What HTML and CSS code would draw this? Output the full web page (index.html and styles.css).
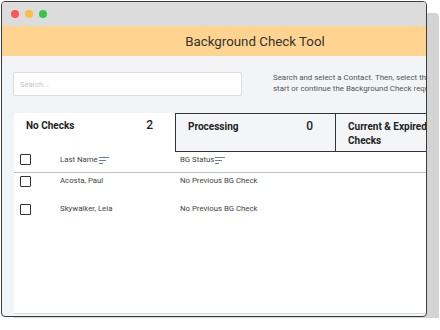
FILE: index.html
```html
<!DOCTYPE html>
<html lang="en">
<head>
    <meta charset="UTF-8">
    <meta name="viewport" content="width=device-width, initial-scale=1.0">
    <title>Background Check Tool</title>
    <link rel="stylesheet" href="styles.css">
</head>
<body>

<div class="window">
    <div class="titlebar">
        <span class="dot red"></span>
        <span class="dot yellow"></span>
        <span class="dot green"></span>
    </div>

    <div class="viewport">
        <div class="page">
            <div class="header">Background Check Tool</div>

            <div class="toolbar">
                <input type="text" class="search" placeholder="Search...">
                <p class="help">Search and select a Contact. Then, select the Background Check type to<br>start or continue the Background Check request for the Contact.</p>
            </div>

            <div class="panel">
                <div class="tabs">
                    <div class="tab active">
                        <span class="tab-label">No Checks</span>
                        <span class="tab-count">2</span>
                    </div>
                    <div class="tab">
                        <span class="tab-label">Processing</span>
                        <span class="tab-count">0</span>
                    </div>
                    <div class="tab">
                        <span class="tab-label">Current &amp; Expired Checks</span>
                        <span class="tab-count">0</span>
                    </div>
                </div>

                <div class="table">
                    <div class="row head">
                        <span class="cell check"><span class="box"></span></span>
                        <span class="cell name">Last Name
                            <svg class="sort" width="10" height="7" viewBox="0 0 10 7"><path d="M0 0.5H10M0 3.5H7M0 6.5H4" stroke="#6b7f99" stroke-width="1"/></svg>
                        </span>
                        <span class="cell status">BG Status
                            <svg class="sort" width="10" height="7" viewBox="0 0 10 7"><path d="M0 0.5H10M0 3.5H7M0 6.5H4" stroke="#6b7f99" stroke-width="1"/></svg>
                        </span>
                    </div>
                    <div class="row">
                        <span class="cell check"><span class="box"></span></span>
                        <span class="cell name">Acosta, Paul</span>
                        <span class="cell status">No Previous BG Check</span>
                    </div>
                    <div class="row">
                        <span class="cell check"><span class="box"></span></span>
                        <span class="cell name">Skywalker, Leia</span>
                        <span class="cell status">No Previous BG Check</span>
                    </div>
                </div>
            </div>
        </div>
    </div>
</div>

</body>
</html>
```

FILE: styles.css
```css
body {
    font-family: Roboto, "Liberation Sans", Arial, sans-serif;
    margin: 0;
    padding: 1px;
    background-color: #ffffff;
    color: #333;
}
.window {
    width: 424px;
    height: 314px;
    border: 1px solid #3c3c3c;
    border-radius: 4px;
    box-shadow: 12px 12px 0 0 #d4d4d4;
    background-color: #f3f4f6;
    display: flex;
    flex-direction: column;
    overflow: hidden;
}
.titlebar {
    height: 24px;
    flex-shrink: 0;
    background-color: #dcdcdc;
    display: flex;
    align-items: center;
    gap: 6px;
    padding-left: 9px;
}
.dot {
    width: 8px;
    height: 8px;
    border-radius: 50%;
}
.red { background-color: #fc5753; }
.yellow { background-color: #fdbc40; }
.green { background-color: #33c748; }
.viewport {
    flex: 1;
    overflow: hidden;
    display: flex;
}
.page {
    width: 506px;
    flex-shrink: 0;
    display: flex;
    flex-direction: column;
}
.header {
    height: 30px;
    background-color: #ffd491;
    text-align: center;
    font-size: 13.3px;
    line-height: 31px;
    color: #333;
}
.toolbar {
    display: flex;
    align-items: flex-start;
    padding: 16px 0 0 11px;
    height: 41px;
    overflow: hidden;
}
.search {
    flex: none;
    width: 229px;
    height: 24px;
    box-sizing: border-box;
    border: 1px solid #dcdcdc;
    border-radius: 2px;
    background-color: #fff;
    padding: 0 6px;
    font-family: inherit;
    font-size: 7.5px;
    outline: none;
}
.search::placeholder {
    color: #c4c4c4;
}
.help {
    flex: none;
    margin: 0 0 0 31px;
    font-size: 7.9px;
    line-height: 11px;
    color: #555;
    white-space: nowrap;
}
.panel {
    flex: 1;
    margin-left: 12px;
    background-color: #fff;
    border-bottom: 1px solid #d7dde2;
    margin-bottom: 2px;
}
.tabs {
    display: flex;
    height: 39px;
}
.tab {
    width: 160px;
    box-sizing: border-box;
    border: 1px solid #333;
    border-right: none;
    background-color: #f3f5f7;
    display: flex;
    justify-content: space-between;
    align-items: flex-start;
    padding: 6px 12px 0 12px;
    font-size: 10px;
    font-weight: bold;
    line-height: 14px;
    color: #222;
}
.tab.active {
    width: 161px;
    border: none;
    background-color: #fff;
    padding-top: 6px;
}
.tab-label {
    max-width: 90px;
}
.tab-count {
    font-size: 12px;
    font-weight: 500;
    line-height: 12px;
    padding-right: 10px;
}
.row {
    display: flex;
    align-items: flex-start;
    box-sizing: border-box;
    height: 28px;
    padding-top: 3px;
    font-size: 7.8px;
    color: #444;
}
.row.head {
    height: 21px;
    padding-top: 2px;
    border-bottom: 1px solid #b9c4ca;
}
.cell.check {
    width: 40px;
    padding-left: 6px;
}
.box {
    display: block;
    width: 9px;
    height: 9px;
    border: 1px solid #333;
    border-radius: 1px;
}
.cell.name {
    width: 120px;
    display: flex;
    align-items: center;
    gap: 1px;
}
.cell.status {
    display: flex;
    align-items: center;
    gap: 1px;
}
.sort {
    margin-top: 3px;
}
```
